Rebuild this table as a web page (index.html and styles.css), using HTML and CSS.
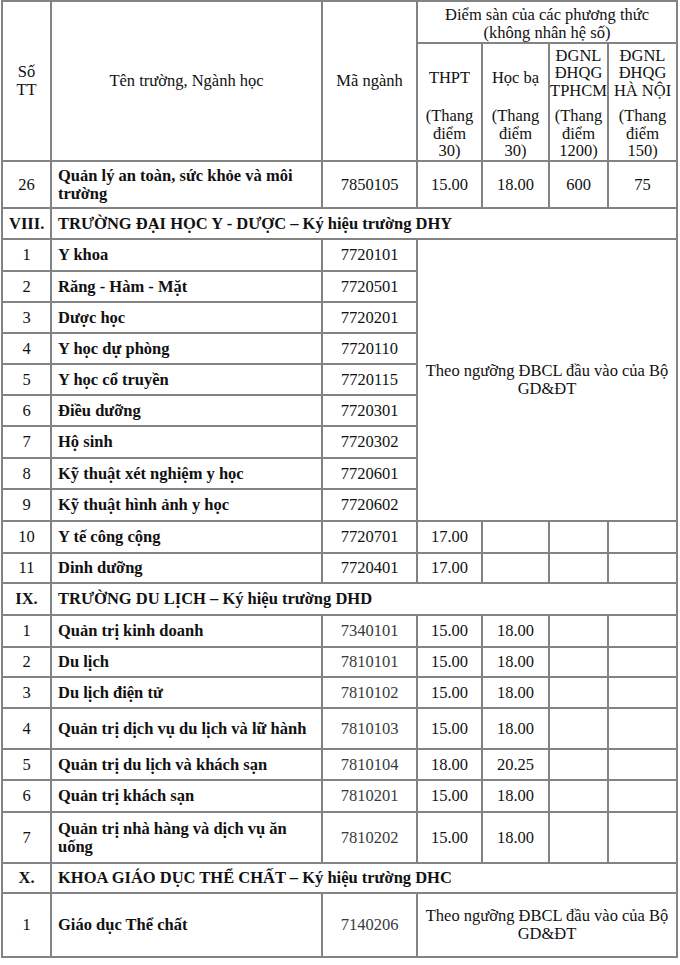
FILE: index.html
```html
<!DOCTYPE html>
<html lang="vi">
<head>
<meta charset="utf-8">
<title>Điểm sàn</title>
<link rel="stylesheet" href="styles.css">
</head>
<body>
<table class="grid">
  <colgroup>
    <col class="c-stt"><col class="c-name"><col class="c-code"><col class="c-thpt"><col class="c-hb"><col class="c-hcm"><col class="c-hn">
  </colgroup>
  <thead>
    <tr class="h-top">
      <th rowspan="2" class="center">Số<br>TT</th>
      <th rowspan="2" class="center">Tên trường, Ngành học</th>
      <th rowspan="2" class="center">Mã ngành</th>
      <th colspan="4" class="center group">Điểm sàn của các phương thức<br>(không nhân hệ số)</th>
    </tr>
    <tr class="h-sub">
      <th class="sub"><div class="label single">THPT</div><div class="scale">(Thang<br>điểm<br>30)</div></th>
      <th class="sub"><div class="label single">Học bạ</div><div class="scale">(Thang<br>điểm<br>30)</div></th>
      <th class="sub"><div class="label">ĐGNL<br>ĐHQG<br>TPHCM</div><div class="scale">(Thang<br>điểm<br>1200)</div></th>
      <th class="sub"><div class="label">ĐGNL<br>ĐHQG<br>HÀ NỘI</div><div class="scale">(Thang<br>điểm<br>150)</div></th>
    </tr>
  </thead>
  <tbody>
    <tr class="r47"><td class="center">26</td><td class="name">Quản lý an toàn, sức khỏe và môi trường</td><td class="center">7850105</td><td class="center">15.00</td><td class="center">18.00</td><td class="center">600</td><td class="center">75</td></tr>

    <tr class="r31 section"><td class="center">VIII.</td><td colspan="6" class="name">TRƯỜNG ĐẠI HỌC Y - DƯỢC – Ký hiệu trường DHY</td></tr>
    <tr class="r32"><td class="center">1</td><td class="name">Y khoa</td><td class="center">7720101</td><td colspan="4" rowspan="9" class="center">Theo ngưỡng ĐBCL đầu vào của Bộ GD&amp;ĐT</td></tr>
    <tr class="r31"><td class="center">2</td><td class="name">Răng - Hàm - Mặt</td><td class="center">7720501</td></tr>
    <tr class="r31"><td class="center">3</td><td class="name">Dược học</td><td class="center">7720201</td></tr>
    <tr class="r31"><td class="center">4</td><td class="name">Y học dự phòng</td><td class="center">7720110</td></tr>
    <tr class="r31"><td class="center">5</td><td class="name">Y học cổ truyền</td><td class="center">7720115</td></tr>
    <tr class="r31"><td class="center">6</td><td class="name">Điều dưỡng</td><td class="center">7720301</td></tr>
    <tr class="r32"><td class="center">7</td><td class="name">Hộ sinh</td><td class="center">7720302</td></tr>
    <tr class="r31"><td class="center">8</td><td class="name">Kỹ thuật xét nghiệm y học</td><td class="center">7720601</td></tr>
    <tr class="r32"><td class="center">9</td><td class="name">Kỹ thuật hình ảnh y học</td><td class="center">7720602</td></tr>
    <tr class="r32"><td class="center">10</td><td class="name">Y tế công cộng</td><td class="center">7720701</td><td class="center">17.00</td><td></td><td></td><td></td></tr>
    <tr class="r30"><td class="center">11</td><td class="name">Dinh dưỡng</td><td class="center">7720401</td><td class="center">17.00</td><td></td><td></td><td></td></tr>

    <tr class="r32 section"><td class="center">IX.</td><td colspan="6" class="name">TRƯỜNG DU LỊCH – Ký hiệu trường DHD</td></tr>
    <tr class="r32"><td class="center">1</td><td class="name">Quản trị kinh doanh</td><td class="center code">7340101</td><td class="center">15.00</td><td class="center">18.00</td><td></td><td></td></tr>
    <tr class="r30"><td class="center">2</td><td class="name">Du lịch</td><td class="center code">7810101</td><td class="center">15.00</td><td class="center">18.00</td><td></td><td></td></tr>
    <tr class="r31"><td class="center">3</td><td class="name">Du lịch điện tử</td><td class="center code">7810102</td><td class="center">15.00</td><td class="center">18.00</td><td></td><td></td></tr>
    <tr class="r41"><td class="center">4</td><td class="name">Quản trị dịch vụ du lịch và lữ hành</td><td class="center code">7810103</td><td class="center">15.00</td><td class="center">18.00</td><td></td><td></td></tr>
    <tr class="r31"><td class="center">5</td><td class="name">Quản trị du lịch và khách sạn</td><td class="center code">7810104</td><td class="center">18.00</td><td class="center">20.25</td><td></td><td></td></tr>
    <tr class="r32"><td class="center">6</td><td class="name">Quản trị khách sạn</td><td class="center code">7810201</td><td class="center">15.00</td><td class="center">18.00</td><td></td><td></td></tr>
    <tr class="r51"><td class="center">7</td><td class="name">Quản trị nhà hàng và dịch vụ ăn uống</td><td class="center code">7810202</td><td class="center">15.00</td><td class="center">18.00</td><td></td><td></td></tr>

    <tr class="r30 section"><td class="center">X.</td><td colspan="6" class="name">KHOA GIÁO DỤC THỂ CHẤT – Ký hiệu trường DHC</td></tr>
    <tr class="r64"><td class="center">1</td><td class="name">Giáo dục Thể chất</td><td class="center code">7140206</td><td colspan="4" class="center">Theo ngưỡng ĐBCL đầu vào của Bộ GD&amp;ĐT</td></tr>
  </tbody>
</table>
</body>
</html>
```

FILE: styles.css
```css
html, body {
  margin: 0;
  padding: 0;
  background: #ffffff;
}

body {
  padding: 0 0 0 1px;
  font-family: "Liberation Serif", "Times New Roman", serif;
  font-size: 16.5px;
  line-height: 18px;
  color: #111111;
}

.grid {
  border-collapse: collapse;
  table-layout: fixed;
  width: 676px;
}

.c-stt { width: 49px; }
.c-name { width: 271px; }
.c-code { width: 95px; }
.c-thpt { width: 65px; }
.c-hb { width: 67px; }
.c-hcm { width: 59px; }
.c-hn { width: 69px; }

.grid th,
.grid td {
  border: 2px solid #838383;
  padding: 0 6px;
  vertical-align: middle;
  font-weight: normal;
}

.center {
  text-align: center;
}

.name {
  text-align: left;
  font-weight: bold;
}

.grid td.name {
  font-weight: bold;
}

.section td {
  font-weight: bold;
}

.code {
  color: #3a3a3a;
}

.h-top { height: 42px; }
.h-sub { height: 118px; }

.grid th.group {
  padding-top: 4px;
}

.grid th.sub {
  padding: 0 1px;
  text-align: center;
  line-height: 17.5px;
  vertical-align: top;
}

.label {
  box-sizing: border-box;
  height: 52px;
  margin-top: 3px;
  display: flex;
  align-items: center;
  justify-content: center;
}

.label.single {
  align-items: flex-start;
  padding-top: 22px;
}

.scale {
  margin-top: 8px;
}

.r30 { height: 30px; }
.r31 { height: 31px; }
.r32 { height: 32px; }
.r41 { height: 41px; }
.r47 { height: 47px; }
.r51 { height: 51px; }
.r64 { height: 64px; }
```
